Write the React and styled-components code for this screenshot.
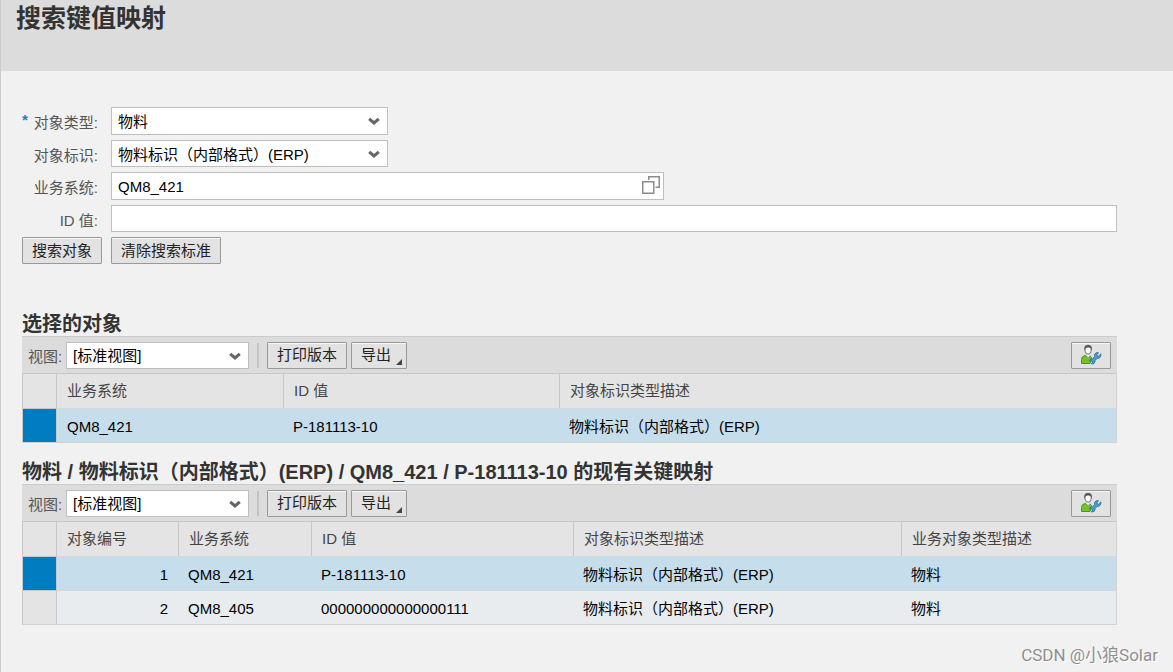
import { useState } from "react";
import styled, { createGlobalStyle } from "styled-components";

const GlobalStyle = createGlobalStyle`
  *, *::before, *::after {
    box-sizing: border-box;
  }

  body {
    margin: 0;
    background: #f1f1f1;
  }

  body, input, select, button {
    font-family: "Liberation Sans", "Noto Sans CJK SC", sans-serif;
    font-size: 15px;
    line-height: 20px;
  }
`;

const Page = styled.div`
  min-height: 100vh;
  border-left: 1px solid #cccccc;
  background: #f1f1f1;
`;

const Header = styled.header`
  height: 71px;
  padding: 0 15px;
  background: #dcdcdc;
`;

const Title = styled.h1`
  margin: 0;
  font-size: 25px;
  line-height: 36px;
  font-weight: 700;
  color: #333333;
`;

const Main = styled.main`
  padding: 36px 56px 0 21px;
`;

const Form = styled.form`
  display: grid;
  grid-template-columns: 76px 1fr;
  grid-template-rows: 28px 27px 28px 27px;
  gap: 5px 13px;
`;

const Label = styled.label`
  display: flex;
  justify-content: flex-end;
  align-items: center;
  padding-top: 4px;
  color: #555555;
  white-space: nowrap;
`;

const Required = styled.span`
  margin-right: auto;
  align-self: flex-start;
  line-height: 18px;
  font-weight: 700;
  color: #1f7fc1;
`;

const Field = styled.div`
  position: relative;
  width: ${(p) => p.$width || "100%"};
  height: ${(p) => p.$height || "auto"};
  max-width: 100%;
`;

const Input = styled.input`
  display: block;
  width: 100%;
  height: 100%;
  padding: 0 6px;
  border: 1px solid #bfbfbf;
  border-radius: 0;
  background: #ffffff;
  color: #000000;
`;

const SelectBox = styled.select`
  display: block;
  width: 100%;
  height: 100%;
  padding: 2px 30px 0 6px;
  border: 1px solid #bfbfbf;
  border-radius: 0;
  background: #ffffff;
  color: #000000;
  appearance: none;
`;

const Chevron = styled.svg`
  position: absolute;
  top: 10px;
  right: 8px;
  pointer-events: none;
`;

const ValueHelp = styled.button`
  position: absolute;
  top: 4px;
  right: 4px;
  width: 19px;
  height: 20px;
  padding: 0;
  border: 0;
  background: transparent;

  svg {
    display: block;
  }
`;

const Actions = styled.div`
  display: flex;
  gap: 9px;
  margin-top: 5px;
`;

const Button = styled.button`
  position: relative;
  display: flex;
  align-items: center;
  height: 27px;
  padding: 0 ${(p) => (p.$menu ? "15px" : "9px")} 0 9px;
  border: 1px solid #999999;
  border-radius: 1px;
  background: #e2e2e2;
  box-shadow: inset 0 1px 0 #f8f8f8;
  color: #222222;
  white-space: nowrap;
`;

const MenuCorner = styled.span`
  position: absolute;
  right: 4px;
  bottom: 3px;
  border-left: 6px solid transparent;
  border-bottom: 6px solid #444444;
`;

const Section = styled.section`
  margin-top: ${(p) => p.$top};
`;

const SectionTitle = styled.h2`
  margin: 0;
  font-size: 20px;
  line-height: 24px;
  font-weight: 700;
  color: #333333;
`;

const Toolbar = styled.div`
  display: flex;
  align-items: center;
  height: 37px;
  padding: 0 6px;
  border-top: 1px solid #cbcbcb;
  background: #dcdcdc;
`;

const ViewLabel = styled.label`
  width: 38px;
  padding-top: 3px;
  color: #555555;
  white-space: nowrap;
`;

const Separator = styled.span`
  width: 2px;
  height: 25px;
  margin: 0 8px;
  background: #c2c2c2;
`;

const Tools = styled.div`
  display: flex;
  flex: 1;
  gap: 4px;
`;

const IconButton = styled(Button)`
  justify-content: center;
  width: 40px;
  margin-left: auto;
  padding: 0;
`;

const DataTable = styled.table`
  width: 100%;
  table-layout: fixed;
  border-spacing: 0;
  border-right: 1px solid #d2d2d2;
  border-bottom: 1px solid #d2d2d2;
`;

const HeadRow = styled.tr`
  height: 35px;
`;

const HeadCell = styled.th`
  padding: 0 10px;
  border-top: 1px solid #c8c8c8;
  border-left: 1px solid #c8c8c8;
  background: #e4e4e4;
  color: #444444;
  font-weight: 400;
  text-align: left;
`;

const Row = styled.tr`
  height: 34px;
  background: ${(p) => (p.$selected ? "#c6deeb" : "#e8ecef")};
  cursor: default;
`;

const Marker = styled.td`
  padding: 0;
  border-top: 1px solid #c8c8c8;
  border-left: 1px solid #c8c8c8;
  background: ${(p) => (p.$selected ? "#007cc0" : "#e4e4e4")};
`;

const Cell = styled.td`
  padding: 3px 10px 0 10px;
  border-top: 1px solid #d2d8dc;
  color: #000000;
  text-align: ${(p) => (p.$numeric ? "right" : "left")};

  ${Marker} + & {
    border-left: 1px solid #c8c8c8;
  }
`;

const Footer = styled.footer`
  padding: 18px 15px 0;
  font-family: Roboto, "Noto Sans CJK SC", sans-serif;
  font-size: 17px;
  line-height: 24px;
  color: #8f8f8f;
  text-align: right;
  text-shadow: 1px 1px 0 #ffffff;
`;

function Select({ id, options, width, height }) {
  return (
    <Field $width={width} $height={height}>
      <SelectBox id={id}>
        {options.map((o) => (
          <option key={o}>{o}</option>
        ))}
      </SelectBox>
      <Chevron width="12" height="9" viewBox="0 0 12 9">
        <path d="M1.2 1.8 L6 6 L10.8 1.8" fill="none" stroke="#666666" strokeWidth="3" />
      </Chevron>
    </Field>
  );
}

function CopyIcon() {
  return (
    <svg width="19" height="20" viewBox="0 0 19 20">
      <g fill="none" stroke="#8c8c8c" strokeWidth="1.5">
        <path d="M1.75 5.75 H12.75 V17.25 H1.75 Z" />
        <path d="M7.75 4 V0.75 H18.25 V11.25 H14.5" />
      </g>
    </svg>
  );
}

function PersonalizeIcon() {
  return (
    <svg width="22" height="22" viewBox="0 0 22 22">
      <path
        d="M1.5 19.5 V15.5 Q1.5 12 5.2 11.5 L8 13.5 L10.2 12 Q11.8 13 11.6 15.5 L10 19.5 Z"
        fill="#7abf25"
        stroke="#3f9a30"
      />
      <path d="M6.5 9.5 H9.7 V11.8 L8.1 13.4 L6.5 11.8 Z" fill="#f4f4f4" stroke="#b5b5b5" strokeWidth="0.6" />
      <ellipse cx="8.1" cy="6" rx="3.1" ry="4.2" fill="#ffffff" stroke="#8a8a8a" strokeWidth="1.2" />
      <path d="M4.3 7 Q3.4 0.8 8.1 0.8 Q12.8 0.8 11.9 7 L10.8 4.2 Q8.1 2.8 5.4 4.2 Z" fill="#5a5a5a" />
      <path
        d="M21 9.8 L18.6 12.2 L17 11.6 L16.8 10.2 L18.6 8.8 Q15.4 8 14.4 10.8 L14.6 12.6 L12.6 14.8 Q10 14.6 9.6 17 L11.6 16.8 L12.6 18 L11.4 20 Q14.6 20.4 15.2 17.4 L15 16.6 L17.2 14.4 Q21 14.6 21 9.8 Z"
        fill="#4f9bcf"
        stroke="#24699c"
        strokeWidth="0.8"
        strokeLinejoin="round"
      />
    </svg>
  );
}

function ResultTable({ id, title, top, columns, rows }) {
  const [selected, setSelected] = useState(0);

  return (
    <Section $top={top}>
      <SectionTitle>{title}</SectionTitle>
      <Toolbar>
        <ViewLabel htmlFor={`${id}-view`}>视图:</ViewLabel>
        <Select id={`${id}-view`} options={["[标准视图]"]} width="183px" height="27px" />
        <Separator />
        <Tools>
          <Button type="button">打印版本</Button>
          <Button type="button" $menu>
            导出
            <MenuCorner />
          </Button>
          <IconButton type="button" aria-label="个性化">
            <PersonalizeIcon />
          </IconButton>
        </Tools>
      </Toolbar>
      <DataTable>
        <colgroup>
          <col width="34" />
          {columns.map((c) => (
            <col key={c.label} width={c.width} />
          ))}
        </colgroup>
        <thead>
          <HeadRow>
            <HeadCell />
            {columns.map((c) => (
              <HeadCell key={c.label}>{c.label}</HeadCell>
            ))}
          </HeadRow>
        </thead>
        <tbody>
          {rows.map((row, i) => (
            <Row key={i} $selected={i === selected} onClick={() => setSelected(i)}>
              <Marker $selected={i === selected} />
              {row.map((value, j) => (
                <Cell key={j} $numeric={columns[j].numeric}>
                  {value}
                </Cell>
              ))}
            </Row>
          ))}
        </tbody>
      </DataTable>
    </Section>
  );
}

const objectColumns = [
  { label: "业务系统", width: 227 },
  { label: "ID 值", width: 276 },
  { label: "对象标识类型描述" },
];

const objectRows = [["QM8_421", "P-181113-10", "物料标识（内部格式）(ERP)"]];

const mappingColumns = [
  { label: "对象编号", width: 122, numeric: true },
  { label: "业务系统", width: 133 },
  { label: "ID 值", width: 262 },
  { label: "对象标识类型描述", width: 328 },
  { label: "业务对象类型描述" },
];

const mappingRows = [
  ["1", "QM8_421", "P-181113-10", "物料标识（内部格式）(ERP)", "物料"],
  ["2", "QM8_405", "000000000000000111", "物料标识（内部格式）(ERP)", "物料"],
];

export default function App() {
  return (
    <Page>
      <GlobalStyle />
      <Header>
        <Title>搜索键值映射</Title>
      </Header>

      <Main>
        <Form id="search" onSubmit={(e) => e.preventDefault()}>
          <Label htmlFor="type">
            <Required>*</Required>
            对象类型:
          </Label>
          <Select id="type" options={["物料"]} width="277px" />

          <Label htmlFor="ident">对象标识:</Label>
          <Select id="ident" options={["物料标识（内部格式）(ERP)"]} width="277px" />

          <Label htmlFor="system">业务系统:</Label>
          <Field $width="553px">
            <Input id="system" defaultValue="QM8_421" />
            <ValueHelp type="button" aria-label="值帮助">
              <CopyIcon />
            </ValueHelp>
          </Field>

          <Label htmlFor="value">ID 值:</Label>
          <Field>
            <Input id="value" />
          </Field>
        </Form>
        <Actions>
          <Button type="submit" form="search">
            搜索对象
          </Button>
          <Button type="reset" form="search">
            清除搜索标准
          </Button>
        </Actions>

        <ResultTable
          id="objects"
          title="选择的对象"
          top="48px"
          columns={objectColumns}
          rows={objectRows}
        />
        <ResultTable
          id="mappings"
          title="物料 / 物料标识（内部格式）(ERP) / QM8_421 / P-181113-10 的现有关键映射"
          top="17px"
          columns={mappingColumns}
          rows={mappingRows}
        />
      </Main>

      <Footer>CSDN @小狼Solar</Footer>
    </Page>
  );
}
